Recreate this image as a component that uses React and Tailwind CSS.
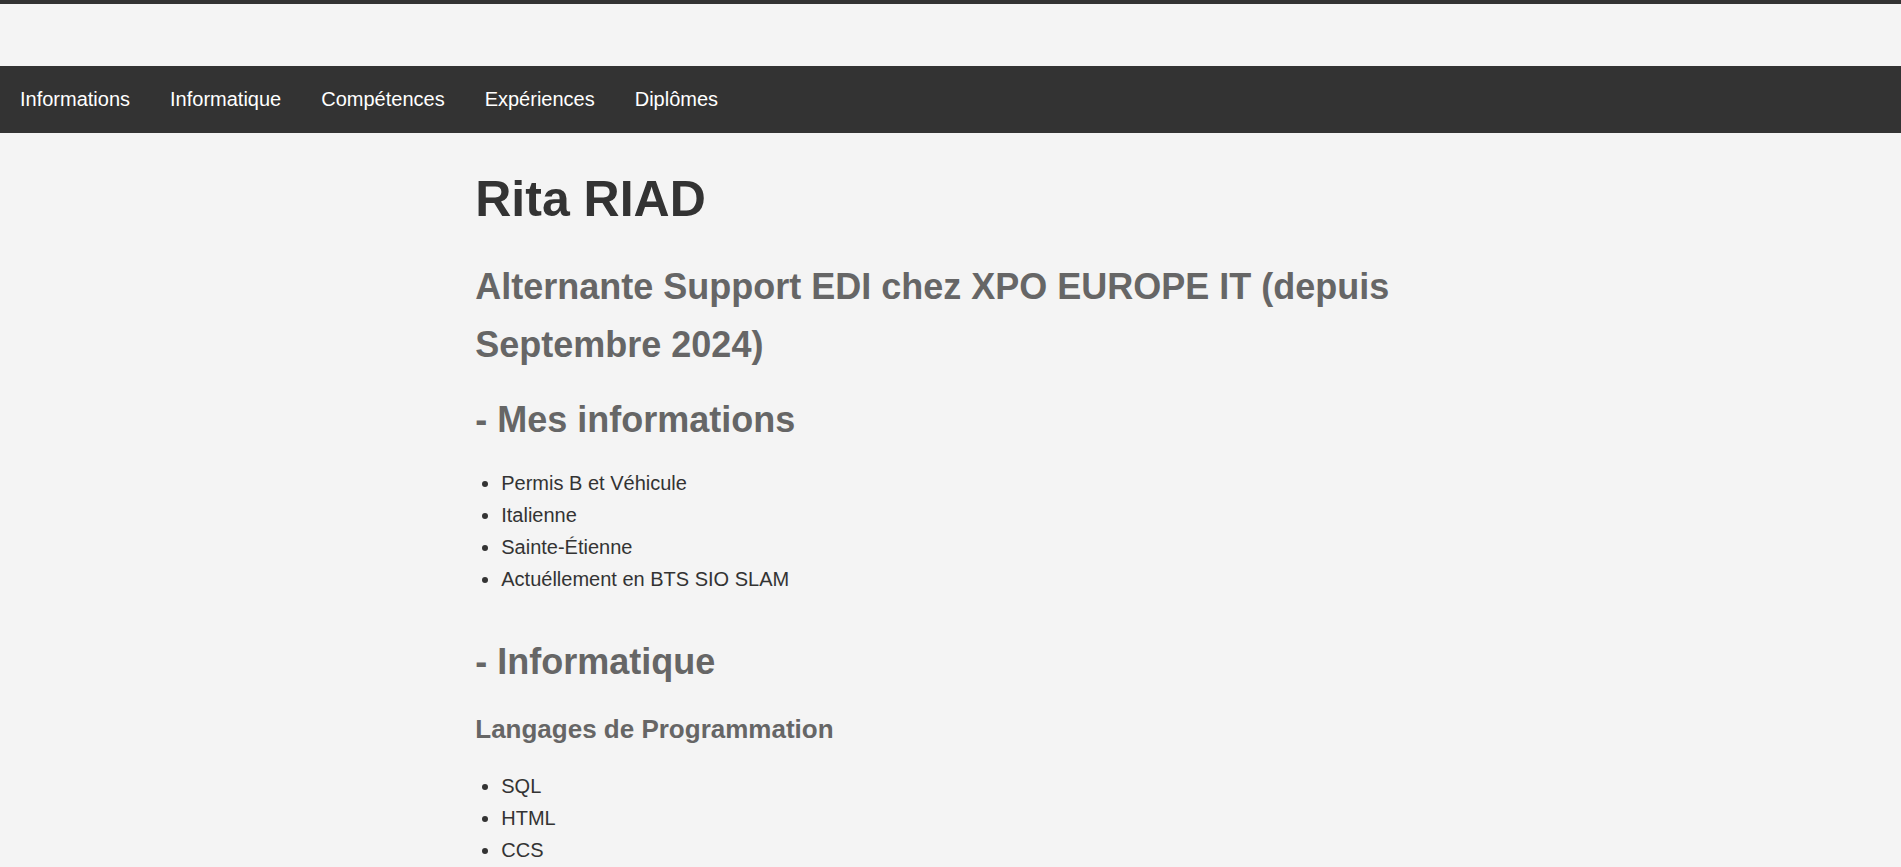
import React from 'react';

const navLinks = ['Informations', 'Informatique', 'Compétences', 'Expériences', 'Diplômes'];

const infos = ['Permis B et Véhicule', 'Italienne', 'Sainte-Étienne', 'Actuéllement en BTS SIO SLAM'];
const langages = ['SQL', 'HTML', 'CCS'];

const App = () => {
  return (
    <div
      className="min-h-screen bg-[#f4f4f4] text-[#333] text-[20px] leading-[1.6]"
      style={{ fontFamily: '"Liberation Sans", Arial, sans-serif' }}
    >
      {/* header */}
      <header className="h-[66px] border-t-4 border-[#333]" />

      <nav className="h-[67px] bg-[#333] flex items-center pb-[2px]">
        {navLinks.map((link) => (
          <a key={link} href="#" className="px-5 text-white text-[20px] leading-none no-underline">
            {link}
          </a>
        ))}
      </nav>

      <main className="w-1/2 mx-auto pt-[26px] pb-10">
        <h1 className="text-[50px] leading-[80px] font-bold text-[#333]">Rita RIAD</h1>
        <h2 className="mt-[19px] text-[36px] leading-[57.6px] font-bold text-[#666]">
          Alternante Support EDI chez XPO EUROPE IT (depuis Septembre 2024)
        </h2>

        <section id="informations">
          <h2 className="mt-[18px] text-[36px] leading-[57.6px] font-bold text-[#666]">- Mes informations</h2>
          <ul className="mt-[18px] pl-[26px] list-disc">
            {infos.map((item) => (
              <li key={item}>{item}</li>
            ))}
          </ul>
        </section>

        <section id="informatique">
          <h2 className="mt-[38px] text-[36px] leading-[57.6px] font-bold text-[#666]">- Informatique</h2>
          <h3 className="mt-[19px] text-[26px] leading-[41.6px] font-bold text-[#666]">Langages de Programmation</h3>
          <ul className="mt-[19px] pl-[26px] list-disc">
            {langages.map((item) => (
              <li key={item}>{item}</li>
            ))}
          </ul>
        </section>
      </main>
    </div>
  );
};

export default App;
